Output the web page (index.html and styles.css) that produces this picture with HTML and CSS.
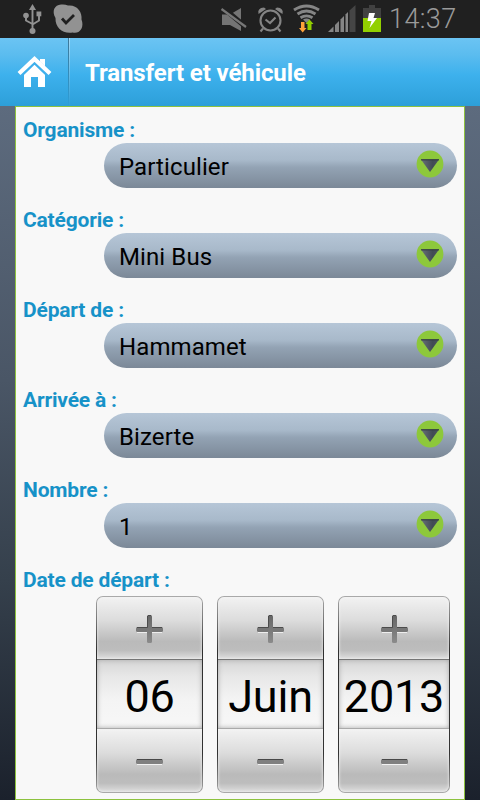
FILE: index.html
```html
<!DOCTYPE html>
<html lang="fr">
<head>
<meta charset="utf-8">
<title>Transfert et véhicule</title>
<link rel="stylesheet" href="styles.css">
</head>
<body>
<svg class="defs" width="0" height="0">
  <defs>
    <linearGradient id="tri" x1="0" y1="0" x2="1" y2="0"><stop offset="0" stop-color="#687078"/><stop offset=".65" stop-color="#414a54"/><stop offset="1" stop-color="#4b545f"/></linearGradient>
    <linearGradient id="sign" x1="0" y1="0" x2="0" y2="1"><stop offset="0" stop-color="#656565"/><stop offset="1" stop-color="#8b8b8b"/></linearGradient>
    <symbol id="arrow" viewBox="0 0 28 28"><circle cx="14" cy="14" r="13.4" fill="#8dc83b"/><path d="M5 9.500H23L14 22Z" fill="url(#tri)"/><path d="M5 9.800H23" stroke="#343b43" stroke-width="1.200"/></symbol>
    <symbol id="plus" viewBox="0 0 27 28"><rect x="0" y="12" width="27" height="5" rx="1.500" fill="#777"/><rect x="11" y="0" width="5" height="28" rx="1.500" fill="url(#sign)"/><path d="M1 12.500H11.500V1M12 .5H15M16 12.500H26" fill="none" stroke="#4c4c4c"/><path d="M1 17.500H11M16 17.500H26" stroke="#eee"/></symbol>
    <symbol id="minus" viewBox="0 0 27 6"><rect x="0" y="0" width="27" height="5" rx="1.500" fill="#808080"/><path d="M1 .5H26" stroke="#484848"/><path d="M1 5.500H26" stroke="#f2f2f2"/></symbol>
  </defs>
</svg>
<div class="statusbar">
  <svg class="status-icons" width="480" height="38" viewBox="0 0 480 38">
    <g fill="#929292" stroke="none">
      <path d="M32.500 4L36 10H29Z"/><circle cx="26" cy="15.500" r="2.800"/><rect x="36.500" y="11.500" width="4.800" height="4.800"/><circle cx="32.500" cy="31" r="3"/>
      <path d="M32.500 8V31M26 16V20.500L32.500 24M39 15V20.500L32.500 24.500" fill="none" stroke="#929292" stroke-width="1.900"/>
      <path d="M61 4.500Q65 4 68 5.500C77 4.500 82.500 12 81.500 19.500C84.500 27 80 34.500 72.500 32.500C63 34 55 28 55.500 18C51.500 11 54.500 5 61 4.500Z"/>
    </g>
    <path d="M62 18.500L66 23L74 15" fill="none" stroke="#202020" stroke-width="2.800"/>
    <path d="M222 14.500H230L241 8V31L230 25H222Z" fill="#747474"/>
    <path d="M222 7L247 28" stroke="#202020" stroke-width="5"/><path d="M221.500 9L246 27" stroke="#777" stroke-width="2.200"/>
    <g fill="none" stroke="#848484" stroke-width="2.100"><circle cx="270.500" cy="20.500" r="10"/><path d="M265.500 19.500L270 23L275.500 17.500M263 28.500L260.500 31.500M278 28.500L280.500 31.500" /></g>
    <path d="M258.500 14Q257 8 264 7.500L266 9ZM282.500 14Q284 8 277 7.500L275 9Z" fill="#848484"/>
    <g fill="none" stroke="#858585" stroke-width="2.900"><path d="M294 10Q306.500 2 319 10M297.500 14Q306.500 8 315.500 14M300.500 17.800Q306.500 14 312.500 17.800"/></g>
    <path d="M303 19.500Q306.500 17.500 310 19.500L306.500 23Z" fill="#858585"/>
    <path d="M301 22H304.500V28H306.500L302.700 32.500L299 28H301Z" fill="#ffa23a"/>
    <path d="M307.500 30V24H305.500L309.500 19.500L313.500 24H311.500V30Z" fill="#92cf00"/>
    <path d="M328 32L333.500 26.500V32Z" fill="#858585"/><path d="M335 25L339 21V32H335Z" fill="#858585"/><path d="M340.500 19.500L344 16V32H340.500Z" fill="#858585"/><path d="M345.500 14.500L348 12V32H345.500Z" fill="#858585"/><path d="M349.500 10.500L355.500 5V32H349.500Z" fill="#454545"/>
    <path d="M363 8H369V5H375V8H381V19H363Z" fill="#414141"/><rect x="363" y="18" width="18" height="14" fill="#92d000"/>
    <path d="M369 13H375L373.500 18H377L369.500 28L371.500 21H367.500Z" fill="#fff"/>
  </svg>
  <span class="clock">14:37</span>
</div>
<header class="header">
  <div class="home"><svg width="36" height="32" viewBox="0 0 36 32"><path d="M23 4H28V12H23Z" fill="#fff"/><path d="M7 18L17.500 8L28 18V32H21V22H14V32H7Z" fill="#fff"/><path d="M2 20.500L17.500 5.500L33 20.500" fill="none" stroke="#3fb0ec" stroke-width="6"/><path d="M2 18.500L17.500 4L33 18.500" fill="none" stroke="#fff" stroke-width="4.200"/></svg></div>
  <h1 class="title">Transfert et véhicule</h1>
</header>
<main class="panel">
  <div class="field"><label class="label">Organisme :</label><div class="select"><span>Particulier</span><svg class="arrow"><use href="#arrow"/></svg></div></div>
  <div class="field"><label class="label">Catégorie :</label><div class="select"><span>Mini Bus</span><svg class="arrow"><use href="#arrow"/></svg></div></div>
  <div class="field"><label class="label">Départ de :</label><div class="select"><span>Hammamet</span><svg class="arrow"><use href="#arrow"/></svg></div></div>
  <div class="field"><label class="label">Arrivée à :</label><div class="select"><span>Bizerte</span><svg class="arrow"><use href="#arrow"/></svg></div></div>
  <div class="field"><label class="label">Nombre :</label><div class="select"><span>1</span><svg class="arrow"><use href="#arrow"/></svg></div></div>
  <label class="label">Date de départ :</label>
  <div class="pickers">
    <div class="picker"><div class="btn up"><svg class="plus"><use href="#plus"/></svg></div><div class="value"><span>06</span></div><div class="btn down"><svg class="minus"><use href="#minus"/></svg></div></div>
    <div class="picker"><div class="btn up"><svg class="plus"><use href="#plus"/></svg></div><div class="value"><span>Juin</span></div><div class="btn down"><svg class="minus"><use href="#minus"/></svg></div></div>
    <div class="picker"><div class="btn up"><svg class="plus"><use href="#plus"/></svg></div><div class="value"><span>2013</span></div><div class="btn down"><svg class="minus"><use href="#minus"/></svg></div></div>
  </div>
</main>
</body>
</html>
```
FILE: styles.css
```css
* { box-sizing: border-box; }
body {
  margin: 0;
  width: 480px;
  height: 800px;
  overflow: hidden;
  font-family: Roboto, sans-serif;
  background: linear-gradient(#667386 0, #5d6b7e 106px, #4a5666 380px, #35404c 580px, #1b212c 800px);
}
.defs { display: block; }
.statusbar { position: relative; height: 38px; background: #202020; display: flex; justify-content: flex-end; }
.status-icons { position: absolute; left: 0; top: 0; }
.clock { width: 91px; font-size: 27px; line-height: 38px; letter-spacing: .4px; color: #9a9a9a; font-weight: 300; }
.header {
  height: 68px;
  display: flex;
  background: linear-gradient(#6bc4f3 0, #5bbcef 25%, #3db1ed 54%, #2d9fd9 100%);
}
.home { width: 69px; padding: 17px 0 0 17px; border-right: 1px solid; border-image: linear-gradient(#3e7696, #2d9fd9) 1; }
.title { margin: 0; padding-left: 15px; border-left: 1px solid; border-image: linear-gradient(#a5dbf8, #2d9fd9) 1; font-size: 24px; line-height: 70px; letter-spacing: -.1px; color: #fff; font-weight: 700; }
.panel {
  width: 450px;
  height: 694px;
  margin-left: 15px;
  padding: 9px 7px 0;
  border: 1px solid #8dc23f;
  background: #f8f8f8;
}
.field { height: 90px; }
.label { display: block; height: 27px; line-height: 28px; font-size: 21px; letter-spacing: -.18px; font-weight: 700; color: #1792c8; white-space: nowrap; }
.select {
  width: 353px;
  height: 45px;
  margin-left: 81px;
  padding: 0 13px 0 15px;
  border-radius: 23px;
  display: flex;
  justify-content: space-between;
  background: linear-gradient(#b6c6d7 0, #a8b9ca 38%, #93a3b4 54%, #7b8897 100%);
  font-size: 24px;
  letter-spacing: .1px;
  line-height: 49px;
  color: #000;
}
.arrow { width: 28px; height: 28px; margin-top: 7px; }
.pickers { display: grid; grid-template-columns: 107px 107px 112px; gap: 14px; margin: 3px 0 0 73px; }
.picker {
  height: 197px;
  padding: 1px;
  border-radius: 7px;
  background: linear-gradient(#aaa, #303030 28%, #333 80%, #aaa);
  display: grid;
  grid-template-rows: 62px 70px 63px;
}
.btn { display: flex; justify-content: center; background: linear-gradient(#f2f2f2, #dcdcdc 38%, #bababa 72%, #bdbdbd 86%, #dedede); box-shadow: inset 0 0 3px #f4f4f4; }
.up { border-radius: 6px 6px 0 0; }
.down { border-radius: 0 0 6px 6px; }
.plus { width: 27px; height: 28px; margin-top: 18px; }
.minus { width: 27px; height: 6px; margin-top: 30px; }
.value {
  display: flex;
  justify-content: center;
  border-top: 1px solid #757575;
  border-bottom: 1px solid #aaa;
  background: linear-gradient(#d6d6d6, #e8e8e8 25%, #f4f4f4 60%, #f7f7f7);
  box-shadow: inset 0 0 5px #aaa;
  font-size: 45px;
  letter-spacing: -.2px;
  line-height: 74px;
  color: #000;
}
```
